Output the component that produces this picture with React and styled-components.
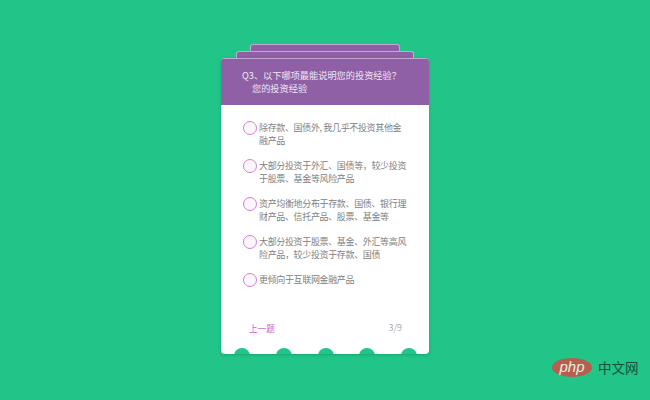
import React from "react";
import styled, { createGlobalStyle } from "styled-components";

const options = [
    "除存款、国债外, 我几乎不投资其他金融产品",
    "大部分投资于外汇、国债等，较少投资于股票、基金等风险产品",
    "资产均衡地分布于存款、国债、银行理财产品、信托产品、股票、基金等",
    "大部分投资于股票、基金、外汇等高风险产品，较少投资于存款、国债",
    "更倾向于互联网金融产品",
];

const notches = [0, 1, 2, 3, 4];

const GlobalStyle = createGlobalStyle`
    html, body {
        margin: 0;
        height: 100%;
    }
    body {
        background: #20c587;
        font-family: "Noto Sans CJK SC", "Liberation Sans", sans-serif;
    }
`;

const Page = styled.div`
    position: relative;
    width: 650px;
    height: 400px;
    overflow: hidden;
    display: flex;
    flex-direction: column;
    align-items: center;
    padding-top: 44px;
    box-sizing: border-box;
    background: #20c587;
`;

const BackCard = styled.div`
    width: ${(props) => props.$width}px;
    height: 7px;
    flex: none;
    box-sizing: border-box;
    background: #8f60a6;
    border: 1px solid #c3a8d0;
    border-bottom: 0;
    border-radius: 3px 3px 0 0;
`;

const Card = styled.div`
    position: relative;
    width: 208px;
    height: 296px;
    flex: none;
    background: #fff;
    border-radius: 4px;
    display: flex;
    flex-direction: column;
    overflow: hidden;
    box-shadow: 0 1px 3px rgba(0, 80, 50, 0.25);
`;

const Header = styled.div`
    height: 47px;
    flex: none;
    box-sizing: border-box;
    background: #8f60a6;
    border-top: 1px solid #c3a8d0;
    padding: 10px 0 0 21px;
    color: #f0e6f4;
    font-size: 9.2px;
    line-height: 13px;
`;

const SubTitle = styled.div`
    padding-left: 10px;
`;

const List = styled.div`
    flex: 1;
    padding: 16px 22px 0 22px;
    display: flex;
    flex-direction: column;
    gap: 12px;
`;

const Option = styled.div`
    display: flex;
    align-items: flex-start;
    gap: 2px;
    min-height: 26px;
`;

const Radio = styled.span`
    flex: none;
    width: 14px;
    height: 14px;
    box-sizing: border-box;
    border: 1.5px solid #d47fd0;
    border-radius: 50%;
    background: #fdf6fc;
`;

const OptionText = styled.div`
    color: #808080;
    font-size: 9px;
    line-height: 13px;
    letter-spacing: -0.35px;
`;

const Footer = styled.div`
    height: 45px;
    flex: none;
    box-sizing: border-box;
    padding: 11px 27px 0 28px;
    display: flex;
    justify-content: space-between;
    align-items: flex-start;
    line-height: 16px;
`;

const PrevLink = styled.span`
    color: #d05fd0;
    font-size: 8.6px;
`;

const Progress = styled.span`
    color: #aaa;
    font-size: 9px;
`;

const NotchRow = styled.div`
    position: absolute;
    left: 13px;
    right: 12px;
    bottom: -10px;
    display: flex;
    justify-content: space-between;
`;

const Notch = styled.span`
    width: 16px;
    height: 16px;
    border-radius: 50%;
    background: #20c587;
`;

const Watermark = styled.div`
    position: absolute;
    left: 552px;
    top: 358px;
    display: flex;
    align-items: center;
    gap: 6px;
`;

const PhpBadge = styled.span`
    width: 40px;
    height: 19px;
    border-radius: 50%;
    background: #b65f50;
    color: #e6efe0;
    font-family: "Liberation Sans", sans-serif;
    font-style: italic;
    font-size: 15px;
    line-height: 17px;
    text-align: center;
`;

const SiteName = styled.span`
    color: #17503c;
    font-size: 13.5px;
    line-height: 19px;
`;

export default function App() {
    return (
        <Page>
            <GlobalStyle />
            <BackCard $width={150} />
            <BackCard $width={178} />
            <Card>
                <Header>
                    Q3、以下哪项最能说明您的投资经验？
                    <SubTitle>您的投资经验</SubTitle>
                </Header>
                <List>
                    {options.map((text) => (
                        <Option key={text}>
                            <Radio />
                            <OptionText>{text}</OptionText>
                        </Option>
                    ))}
                </List>
                <Footer>
                    <PrevLink>上一题</PrevLink>
                    <Progress>3/9</Progress>
                </Footer>
                <NotchRow>
                    {notches.map((n) => (
                        <Notch key={n} />
                    ))}
                </NotchRow>
            </Card>
            <Watermark>
                <PhpBadge>php</PhpBadge>
                <SiteName>中文网</SiteName>
            </Watermark>
        </Page>
    );
}
